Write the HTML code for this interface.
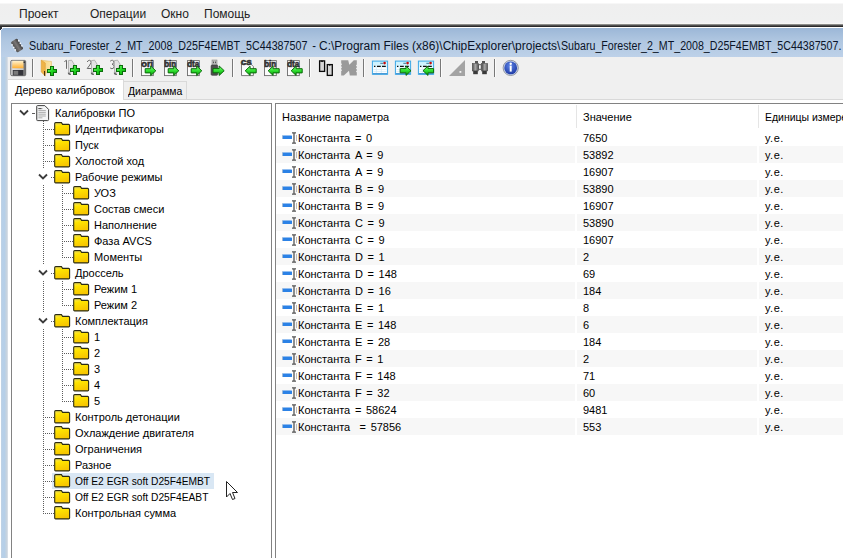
<!DOCTYPE html><html><head><meta charset="utf-8"><style>
*{margin:0;padding:0;box-sizing:border-box}
html,body{width:843px;height:558px;overflow:hidden;background:#f0f0f0;font-family:"Liberation Sans", sans-serif;}
.a{position:absolute}
.t11{font-size:11px;line-height:16px;white-space:pre;color:#000}
.t12{font-size:12px;line-height:16px;white-space:pre;color:#000}
</style></head><body>
<div class="a" style="left:0;top:0;width:843px;height:24px;background:linear-gradient(#ffffff 0,#ffffff 3px,#efefef 4px,#eff0f0 20px,#f1f1f4 23px)"></div>
<div class="a t12" style="left:19px;top:6px;color:#1e1e1e">Проект</div>
<div class="a t12" style="left:90px;top:6px;color:#1e1e1e">Операции</div>
<div class="a t12" style="left:161px;top:6px;color:#1e1e1e">Окно</div>
<div class="a t12" style="left:204px;top:6px;color:#1e1e1e">Помощь</div>
<div class="a" style="left:0;top:23px;width:843px;height:1px;background:#f6f6f4"></div>
<div class="a" style="left:0;top:24px;width:843px;height:1px;background:#8c8c8a"></div>
<div class="a" style="left:0;top:25px;width:843px;height:1px;background:#4e4e4e"></div>
<div class="a" style="left:0;top:26px;width:843px;height:1px;background:#2a2a2a"></div>
<div class="a" style="left:0;top:27px;width:843px;height:531px;background:#c5d7ea"></div>
<div class="a" style="left:1px;top:27px;width:842px;height:1px;background:#ffffff"></div>
<div class="a" style="left:0;top:28px;width:1px;height:530px;background:#ffffff"></div>
<div class="a" style="left:0;top:27px;width:2px;height:2px;background:#2e3034;z-index:2"></div>
<div class="a" style="left:0;top:29px;width:1px;height:1px;background:#24324a;z-index:2"></div>
<div class="a" style="left:1px;top:29px;width:1px;height:1px;background:#e8eef6;z-index:2"></div>
<div class="a" style="left:2px;top:28px;width:1px;height:1px;background:#e8eef6;z-index:2"></div>
<div class="a" style="left:1px;top:28px;width:842px;height:29px;background:linear-gradient(#9cb7d7,#b0c7e1 45%,#bdd1e9)"></div>
<div class="a" style="left:1px;top:57px;width:6px;height:501px;background:linear-gradient(90deg,#c4d3e2 0,#b8d0e8 1px,#b6cfe8 4px,#c6d3df 5px)"></div>
<svg class="a" style="left:6px;top:34px" width="22" height="22" viewBox="0 0 22 22"><defs><linearGradient id="chipg" x1="0" y1="0" x2="1" y2="0"><stop offset="0" stop-color="#505050"/><stop offset="0.5" stop-color="#7a7777"/><stop offset="1" stop-color="#3c3c3c"/></linearGradient></defs><g transform="rotate(-32 11 11.5)"><rect x="7.3" y="5.3" width="7.6" height="12.4" rx="1.5" fill="url(#chipg)"/><g fill="#f4f6fa"><circle cx="7.2" cy="8.4" r="0.85"/><circle cx="7.2" cy="11.4" r="0.85"/><circle cx="7.2" cy="14.4" r="0.85"/><circle cx="15" cy="8.4" r="0.85"/><circle cx="15" cy="11.4" r="0.85"/><circle cx="15" cy="14.4" r="0.85"/></g></g></svg>
<div style="font-size:12.5px;line-height:16px;white-space:pre;color:#0a1428;position:absolute;top:38px;transform-origin:0 0;left:29px;transform:scaleX(0.856)">Subaru_Forester_2_MT_2008_D25F4EMBT_5C44387507</div>
<div style="font-size:12.5px;line-height:16px;white-space:pre;color:#0a1428;position:absolute;top:38px;transform-origin:0 0;left:309px;transform:scaleX(0.9)"> - </div>
<div style="font-size:12.5px;line-height:16px;white-space:pre;color:#0a1428;position:absolute;top:38px;transform-origin:0 0;left:319px;transform:scaleX(0.957)">C:\Program Files (x86)\ChipExplorer\projects\</div>
<div style="font-size:12.5px;line-height:16px;white-space:pre;color:#0a1428;position:absolute;top:38px;transform-origin:0 0;left:561px;transform:scaleX(0.853)">Subaru_Forester_2_MT_2008_D25F4EMBT_5C44387507.</div>
<div class="a" style="left:7px;top:57px;width:836px;height:501px;background:#f0f0f0;border-left:1px solid #d6dde6"></div>
<div class="a" style="left:8px;top:57px;width:835px;height:22px;background:#f0f0f0"></div>
<div class="a" style="left:32px;top:59px;width:1px;height:18px;background:#787878"></div>
<div class="a" style="left:33px;top:59px;width:1px;height:18px;background:#fbfbfb"></div>
<div class="a" style="left:132px;top:59px;width:1px;height:18px;background:#787878"></div>
<div class="a" style="left:133px;top:59px;width:1px;height:18px;background:#fbfbfb"></div>
<div class="a" style="left:232px;top:59px;width:1px;height:18px;background:#787878"></div>
<div class="a" style="left:233px;top:59px;width:1px;height:18px;background:#fbfbfb"></div>
<div class="a" style="left:309px;top:59px;width:1px;height:18px;background:#787878"></div>
<div class="a" style="left:310px;top:59px;width:1px;height:18px;background:#fbfbfb"></div>
<div class="a" style="left:363px;top:59px;width:1px;height:18px;background:#787878"></div>
<div class="a" style="left:364px;top:59px;width:1px;height:18px;background:#fbfbfb"></div>
<div class="a" style="left:440px;top:59px;width:1px;height:18px;background:#787878"></div>
<div class="a" style="left:441px;top:59px;width:1px;height:18px;background:#fbfbfb"></div>
<div class="a" style="left:494px;top:59px;width:1px;height:18px;background:#787878"></div>
<div class="a" style="left:495px;top:59px;width:1px;height:18px;background:#fbfbfb"></div>
<svg width="0" height="0" style="position:absolute"><defs>
<linearGradient id="gPlus" x1="0" y1="0" x2="1" y2="1"><stop offset="0" stop-color="#7dff7d"/><stop offset="0.5" stop-color="#22d822"/><stop offset="1" stop-color="#0a9a0a"/></linearGradient>
<linearGradient id="gArr" x1="0" y1="0" x2="0" y2="1"><stop offset="0" stop-color="#8dff8d"/><stop offset="0.5" stop-color="#2ee02e"/><stop offset="1" stop-color="#0b8f0b"/></linearGradient>
<linearGradient id="gFlop" x1="0" y1="0" x2="0" y2="1"><stop offset="0" stop-color="#fff3cf"/><stop offset="1" stop-color="#ffae2e"/></linearGradient>
<linearGradient id="gFlopF" x1="0" y1="0" x2="1" y2="0"><stop offset="0" stop-color="#d6d6d6"/><stop offset="1" stop-color="#6d6d6d"/></linearGradient>
<linearGradient id="gFold" x1="0" y1="0" x2="1" y2="0"><stop offset="0" stop-color="#f7cf7a"/><stop offset="1" stop-color="#fbe6a8"/></linearGradient>
<linearGradient id="gTab" x1="0" y1="0" x2="0" y2="1"><stop offset="0" stop-color="#c5f0ff"/><stop offset="1" stop-color="#f4fcff"/></linearGradient>
<linearGradient id="gFolder" x1="0" y1="0" x2="0.3" y2="1"><stop offset="0" stop-color="#fff36a"/><stop offset="0.35" stop-color="#ffe400"/><stop offset="1" stop-color="#f7c600"/></linearGradient>
<radialGradient id="gInfo" cx="0.45" cy="0.35" r="0.7"><stop offset="0" stop-color="#5f86e8"/><stop offset="1" stop-color="#1a35a0"/></radialGradient>
<linearGradient id="gBin" x1="0" y1="0" x2="1" y2="0"><stop offset="0" stop-color="#4a4a4a"/><stop offset="0.5" stop-color="#a8a8a8"/><stop offset="1" stop-color="#5a5a5a"/></linearGradient>
</defs></svg>
<svg class="a" style="left:8px;top:58px" width="20" height="20" viewBox="0 0 20 20"><rect x="2.7" y="2.4" width="15" height="15.3" rx="1.2" fill="url(#gFlopF)" stroke="#5c5c5c" stroke-width="0.8"/>
<rect x="4.3" y="2.8" width="11.2" height="7.6" fill="url(#gFlop)"/>
<rect x="4.2" y="10.5" width="11.4" height="1.2" fill="#e8e8e8"/>
<rect x="4.8" y="12" width="10.4" height="5.4" fill="#34343a"/>
<rect x="5.6" y="12.8" width="4.6" height="4" fill="#7a7a7a"/>
<rect x="15.6" y="3.6" width="1.2" height="1.2" fill="#111"/></svg>
<svg class="a" style="left:39px;top:58px" width="20" height="20" viewBox="0 0 20 20"><path d="M2.4 2.2 L12.5 3.5 L12.5 14.5 L6 15 Z" fill="url(#gFold)" stroke="#e3b35a" stroke-width="0.5"/>
<path d="M2.2 2.2 L6.3 5 L6.3 18 L2.2 14 Z" fill="#efb347" stroke="#d9962e" stroke-width="0.5"/>
<path d="M5.6 13 L5.6 17.8" stroke="#3a2200" stroke-width="1"/>
<path d="M11.5 8.5h3v3.0h3.0v3h-3.0v3.0h-3v-3.0h-3.0v-3h3.0z" fill="url(#gPlus)" stroke="#0b6e0b" stroke-width="1" shape-rendering="crispEdges"/></svg>
<svg class="a" style="left:62px;top:58px" width="20" height="20" viewBox="0 0 20 20"><path d="M2.4 3.6 L4.5 2.3 V10.8" fill="none" stroke="#6a6a6a" stroke-width="1"/>
<path d="M6.4 2.6 L9.6 2.2 L12.2 6.4 L8.6 14.2 L6.6 14.4 Z" fill="#e2e2e2" stroke="#9c9c9c" stroke-width="0.7"/>
<path d="M6.4 14.6 Q6.8 16.6 8.8 16.2" fill="none" stroke="#5a5a5a" stroke-width="1.5"/>
<path d="M11.5 7.5h3v3.0h3.0v3h-3.0v3.0h-3v-3.0h-3.0v-3h3.0z" fill="url(#gPlus)" stroke="#0b6e0b" stroke-width="1" shape-rendering="crispEdges"/></svg>
<svg class="a" style="left:85px;top:58px" width="20" height="20" viewBox="0 0 20 20"><path d="M2.2 4 Q3 2.2 4.6 2.3 Q6.4 2.6 6 4.6 Q5.5 6.5 2.2 10.5 H6.6" fill="none" stroke="#6a6a6a" stroke-width="1"/>
<path d="M6.4 2.6 L9.6 2.2 L12.2 6.4 L8.6 14.2 L6.6 14.4 Z" fill="#e2e2e2" stroke="#9c9c9c" stroke-width="0.7"/>
<path d="M6.4 14.6 Q6.8 16.6 8.8 16.2" fill="none" stroke="#5a5a5a" stroke-width="1.5"/>
<path d="M11.5 7.5h3v3.0h3.0v3h-3.0v3.0h-3v-3.0h-3.0v-3h3.0z" fill="url(#gPlus)" stroke="#0b6e0b" stroke-width="1" shape-rendering="crispEdges"/></svg>
<svg class="a" style="left:108px;top:58px" width="20" height="20" viewBox="0 0 20 20"><path d="M2.2 3.2 Q3.2 2.2 4.5 2.3 Q6.2 2.6 5.8 4.6 Q5.5 6 4 6.2 Q6.4 6.5 6.1 8.7 Q5.7 10.8 4 10.7 Q2.8 10.7 2.1 9.8" fill="none" stroke="#6a6a6a" stroke-width="1"/>
<path d="M6.4 2.6 L9.6 2.2 L12.2 6.4 L8.6 14.2 L6.6 14.4 Z" fill="#e2e2e2" stroke="#9c9c9c" stroke-width="0.7"/>
<path d="M6.4 14.6 Q6.8 16.6 8.8 16.2" fill="none" stroke="#5a5a5a" stroke-width="1.5"/>
<path d="M11.5 7.5h3v3.0h3.0v3h-3.0v3.0h-3v-3.0h-3.0v-3h3.0z" fill="url(#gPlus)" stroke="#0b6e0b" stroke-width="1" shape-rendering="crispEdges"/></svg>
<svg class="a" style="left:139px;top:58px" width="20" height="20" viewBox="0 0 20 20"><rect x="2.5" y="2.6" width="11.8" height="15" fill="#fbfbfb" stroke="#6c6c6c" stroke-width="0.9"/><text x="2.2" y="8.6" font-family="Liberation Sans" font-weight="bold" font-size="9" fill="#2d2d2d" stroke="#2d2d2d" stroke-width="0.55" textLength="12" lengthAdjust="spacingAndGlyphs">ori</text><path d="M6.2 10.700000000000001H11.7V8L16.8 12.8L11.7 17.6V14.9H6.2Z" fill="url(#gArr)" stroke="#0a6a0a" stroke-width="1" stroke-linejoin="round"/></svg>
<svg class="a" style="left:162px;top:58px" width="20" height="20" viewBox="0 0 20 20"><rect x="2.5" y="2.6" width="11.8" height="15" fill="#fbfbfb" stroke="#6c6c6c" stroke-width="0.9"/><text x="2.2" y="8.6" font-family="Liberation Sans" font-weight="bold" font-size="9" fill="#2d2d2d" stroke="#2d2d2d" stroke-width="0.55" textLength="12" lengthAdjust="spacingAndGlyphs">bin</text><path d="M6.2 10.700000000000001H11.7V8L16.8 12.8L11.7 17.6V14.9H6.2Z" fill="url(#gArr)" stroke="#0a6a0a" stroke-width="1" stroke-linejoin="round"/></svg>
<svg class="a" style="left:185px;top:58px" width="20" height="20" viewBox="0 0 20 20"><rect x="2.5" y="2.6" width="11.8" height="15" fill="#fbfbfb" stroke="#6c6c6c" stroke-width="0.9"/><text x="2.2" y="8.6" font-family="Liberation Sans" font-weight="bold" font-size="9" fill="#2d2d2d" stroke="#2d2d2d" stroke-width="0.55" textLength="12" lengthAdjust="spacingAndGlyphs">dta</text><path d="M6.2 10.700000000000001H11.7V8L16.8 12.8L11.7 17.6V14.9H6.2Z" fill="url(#gArr)" stroke="#0a6a0a" stroke-width="1" stroke-linejoin="round"/></svg>
<svg class="a" style="left:239px;top:58px" width="20" height="20" viewBox="0 0 20 20"><path d="M2.5 6 H11.8 L14.4 8.6 V17.6 H2.5 Z" fill="#fbfbfb" stroke="#6c6c6c" stroke-width="0.9"/><text x="1.8" y="6.6" font-family="Liberation Sans" font-weight="bold" font-size="8.6" fill="#333" stroke="#333" stroke-width="0.55" textLength="11" lengthAdjust="spacingAndGlyphs">cs</text><path d="M17.2 10.7H11.100000000000001V8.2L6.2 12.799999999999999L11.100000000000001 17.4V14.899999999999999H17.2Z" fill="url(#gArr)" stroke="#0a6a0a" stroke-width="1" stroke-linejoin="round"/></svg>
<svg class="a" style="left:262px;top:58px" width="20" height="20" viewBox="0 0 20 20"><rect x="2.5" y="2.6" width="11.8" height="15" fill="#fbfbfb" stroke="#6c6c6c" stroke-width="0.9"/><text x="2.2" y="8.6" font-family="Liberation Sans" font-weight="bold" font-size="9" fill="#2d2d2d" stroke="#2d2d2d" stroke-width="0.55" textLength="12" lengthAdjust="spacingAndGlyphs">bin</text><path d="M17.2 10.7H11.100000000000001V8.2L6.2 12.799999999999999L11.100000000000001 17.4V14.899999999999999H17.2Z" fill="url(#gArr)" stroke="#0a6a0a" stroke-width="1" stroke-linejoin="round"/></svg>
<svg class="a" style="left:285px;top:58px" width="20" height="20" viewBox="0 0 20 20"><rect x="2.5" y="2.6" width="11.8" height="15" fill="#fbfbfb" stroke="#6c6c6c" stroke-width="0.9"/><text x="2.2" y="8.6" font-family="Liberation Sans" font-weight="bold" font-size="9" fill="#2d2d2d" stroke="#2d2d2d" stroke-width="0.55" textLength="12" lengthAdjust="spacingAndGlyphs">dta</text><path d="M17.2 10.7H11.100000000000001V8.2L6.2 12.799999999999999L11.100000000000001 17.4V14.899999999999999H17.2Z" fill="url(#gArr)" stroke="#0a6a0a" stroke-width="1" stroke-linejoin="round"/></svg>
<svg class="a" style="left:208px;top:58px" width="20" height="20" viewBox="0 0 20 20"><rect x="4" y="2" width="5" height="5.4" fill="#bdbdbd" stroke="#8a8a8a" stroke-width="0.6"/>
<rect x="5" y="3.6" width="1" height="1.6" fill="#555"/><rect x="7" y="3.6" width="1" height="1.6" fill="#555"/>
<rect x="3.1" y="7" width="6.6" height="10.3" rx="1" fill="#4e4e4e" stroke="#333" stroke-width="0.6"/>
<path d="M5 10.6H11.2V8L16.2 12.7L11.2 17.4V14.799999999999999H5Z" fill="url(#gArr)" stroke="#0a6a0a" stroke-width="1" stroke-linejoin="round"/></svg>
<svg class="a" style="left:316px;top:58px" width="20" height="20" viewBox="0 0 20 20"><rect x="3.6" y="2.9" width="5" height="10.5" fill="#d7d7d7" stroke="#0a0a0a" stroke-width="1.3"/><path d="M5.1 2.9 Q6.1 4.2 7.1 2.9" fill="#0a0a0a" stroke="#0a0a0a" stroke-width="1"/><rect x="11.3" y="6.6" width="5" height="10.8" fill="#d7d7d7" stroke="#0a0a0a" stroke-width="1.3"/><path d="M12.8 6.6 Q13.8 7.8999999999999995 14.8 6.6" fill="#0a0a0a" stroke="#0a0a0a" stroke-width="1"/></svg>
<svg class="a" style="left:339px;top:58px" width="20" height="20" viewBox="0 0 20 20"><path d="M2.2 2.2 H9.2 L10.3 6.8 L14.8 2.2 H17.8 V17.6 H10.8 L10 12.7 L4.8 17.6 H2.2 Z" fill="#9a9a9a"/>
<g fill="#f0f0f0"><circle cx="2.2" cy="6.3" r="0.7"/><circle cx="2.2" cy="9.3" r="0.7"/><circle cx="2.2" cy="12.3" r="0.7"/><circle cx="17.8" cy="7.5" r="0.7"/><circle cx="17.8" cy="10.5" r="0.7"/><circle cx="17.8" cy="13.5" r="0.7"/></g></svg>
<svg class="a" style="left:370px;top:58px" width="20" height="20" viewBox="0 0 20 20"><rect x="2.4" y="3.1" width="15.2" height="13.2" fill="url(#gTab)" stroke="#3da8e6" stroke-width="1"/>
<rect x="2.9" y="15.2" width="14.2" height="1" fill="#2a88d0"/>
<path d="M10.3 5.3 H13.3" stroke="#2e6e88" stroke-width="0.9"/>
<circle cx="14.6" cy="5.1" r="1.3" fill="#c80c0c"/>
<path d="M4 8.4 H5.4 M7 8.4 H10.8 M12 8.4 H15.8" stroke="#101010" stroke-width="1.1"/>
<rect x="3.4" y="9.6" width="13.2" height="5.4" fill="#ffffff"/>
<path d="M3.4 11.6 H16.6 M3.4 13.6 H16.6" stroke="#cfeaf8" stroke-width="0.7"/>
<path d="M6.4 9.6 V15 M11.4 9.6 V15" stroke="#cfeaf8" stroke-width="0.7"/></svg>
<svg class="a" style="left:393px;top:58px" width="20" height="20" viewBox="0 0 20 20"><rect x="2.4" y="3.1" width="15.2" height="13.2" fill="url(#gTab)" stroke="#3da8e6" stroke-width="1"/>
<rect x="2.9" y="15.2" width="14.2" height="1" fill="#2a88d0"/>
<path d="M10.3 5.3 H13.3" stroke="#2e6e88" stroke-width="0.9"/>
<circle cx="14.6" cy="5.1" r="1.3" fill="#c80c0c"/>
<path d="M4 8.4 H5.4 M7 8.4 H10.8 M12 8.4 H15.8" stroke="#101010" stroke-width="1.1"/>
<rect x="3.4" y="9.6" width="13.2" height="5.4" fill="#ffffff"/>
<path d="M3.4 11.6 H16.6 M3.4 13.6 H16.6" stroke="#cfeaf8" stroke-width="0.7"/>
<path d="M6.4 9.6 V15 M11.4 9.6 V15" stroke="#cfeaf8" stroke-width="0.7"/><path d="M7.2 10.6H13.0V8L18 12.7L13.0 17.4V14.799999999999999H7.2Z" fill="url(#gArr)" stroke="#0a6a0a" stroke-width="1" stroke-linejoin="round"/></svg>
<svg class="a" style="left:416px;top:58px" width="20" height="20" viewBox="0 0 20 20"><rect x="2.4" y="3.1" width="15.2" height="13.2" fill="url(#gTab)" stroke="#3da8e6" stroke-width="1"/>
<rect x="2.9" y="15.2" width="14.2" height="1" fill="#2a88d0"/>
<path d="M10.3 5.3 H13.3" stroke="#2e6e88" stroke-width="0.9"/>
<circle cx="14.6" cy="5.1" r="1.3" fill="#c80c0c"/>
<path d="M4 8.4 H5.4 M7 8.4 H10.8 M12 8.4 H15.8" stroke="#101010" stroke-width="1.1"/>
<rect x="3.4" y="9.6" width="13.2" height="5.4" fill="#ffffff"/>
<path d="M3.4 11.6 H16.6 M3.4 13.6 H16.6" stroke="#cfeaf8" stroke-width="0.7"/>
<path d="M6.4 9.6 V15 M11.4 9.6 V15" stroke="#cfeaf8" stroke-width="0.7"/><path d="M17.6 10.6H12.0V8L7 12.7L12.0 17.4V14.799999999999999H17.6Z" fill="url(#gArr)" stroke="#0a6a0a" stroke-width="1" stroke-linejoin="round"/></svg>
<svg class="a" style="left:447px;top:58px" width="20" height="20" viewBox="0 0 20 20"><path d="M18 2 V18 H2 Z" fill="#a3a3a3"/><rect x="12.5" y="13" width="1.8" height="1.8" fill="#f4f4f4"/></svg>
<svg class="a" style="left:470px;top:58px" width="20" height="20" viewBox="0 0 20 20"><rect x="5" y="3" width="3" height="2.6" fill="#555"/><rect x="12" y="3" width="3" height="2.6" fill="#555"/>
<rect x="2.3" y="5.4" width="6" height="7.6" fill="url(#gBin)" stroke="#444" stroke-width="0.5"/>
<rect x="11.7" y="5.4" width="6" height="7.6" fill="url(#gBin)" stroke="#444" stroke-width="0.5"/>
<rect x="3.2" y="12.8" width="4.6" height="3.4" fill="#3a3a3a"/><rect x="12.2" y="12.8" width="4.6" height="3.4" fill="#3a3a3a"/>
<rect x="8" y="6.2" width="3.8" height="5.6" fill="#555"/><rect x="9" y="7.2" width="1.8" height="3.6" fill="#f2f2f2"/></svg>
<svg class="a" style="left:500px;top:58px" width="20" height="20" viewBox="0 0 20 20"><circle cx="10.7" cy="9.9" r="7.6" fill="#c8d4ec" stroke="#8b8f98" stroke-width="0.9"/>
<circle cx="10.7" cy="9.9" r="6.4" fill="url(#gInfo)"/>
<circle cx="10.7" cy="5.7" r="1.2" fill="#fff"/><rect x="9.7" y="7.6" width="2" height="6" fill="#fff"/></svg>
<div class="a" style="left:8px;top:99px;width:835px;height:459px;background:#fff"></div>
<div class="a" style="left:123px;top:99px;width:720px;height:1px;background:#d9d9d9"></div>
<div class="a" style="left:123px;top:81px;width:64px;height:19px;background:#efefef;border:1px solid #d9d9d9;border-left:none"></div>
<div class="a" style="left:8px;top:79px;width:116px;height:21px;background:#fff;border-top:1px solid #dadada;border-right:1px solid #dadada"></div>
<div class="a t11" style="left:15px;top:82px">Дерево калибровок</div>
<div class="a t11" style="left:128px;top:83px;transform-origin:0 0;transform:scaleX(0.95)">Диаграмма</div>
<div class="a" style="left:11px;top:103px;width:261px;height:460px;background:#fff;border:1px solid #828282"></div>
<div class="a" style="left:275px;top:103px;width:600px;height:460px;background:#fff;border:1px solid #828282"></div>
<div class="a" style="left:43px;top:121px;width:1px;height:393px;background:repeating-linear-gradient(180deg,#5c5c5c 0 1px,transparent 1px 2px)"></div>
<div class="a" style="left:62px;top:185px;width:1px;height:73px;background:repeating-linear-gradient(180deg,#5c5c5c 0 1px,transparent 1px 2px)"></div>
<div class="a" style="left:62px;top:281px;width:1px;height:25px;background:repeating-linear-gradient(180deg,#5c5c5c 0 1px,transparent 1px 2px)"></div>
<div class="a" style="left:62px;top:329px;width:1px;height:73px;background:repeating-linear-gradient(180deg,#5c5c5c 0 1px,transparent 1px 2px)"></div>
<div class="a" style="left:52px;top:473px;width:162px;height:16px;background:#d9e7f4"></div>
<div class="a" style="left:31px;top:113px;width:4px;height:1px;background:repeating-linear-gradient(90deg,#5c5c5c 0 1px,transparent 1px 2px)"></div>
<div class="a" style="left:16px;top:105px;width:16px;height:16px;background:#fff"></div>
<div class="a" style="left:32px;top:113px;width:4px;height:1px;background:repeating-linear-gradient(90deg,#5c5c5c 0 1px,transparent 1px 2px)"></div>
<svg style="position:absolute;left:19px;top:109px" width="11" height="8" viewBox="0 0 11 8"><path d="M1 1.5 L5 5.5 L9 1.5" fill="none" stroke="#3c3c3c" stroke-width="1.8"/></svg>
<svg style="position:absolute;left:35px;top:105px" width="16" height="17" viewBox="0 0 16 17"><path d="M1.6 1.6 Q1.6 0.6 2.6 0.6 L9.8 0.6 L13.6 4.4 L13.6 14.6 Q13.6 15.6 12.6 15.6 L2.6 15.6 Q1.6 15.6 1.6 14.6 Z" fill="#f4f5f6" stroke="#404040" stroke-width="1"/><path d="M2.2 2 V15" stroke="#b0b0b0" stroke-width="0.8"/><path d="M3.4 3.6h4.2M3.4 5.6h7.4M3.4 7.4h7.4M3.4 9.2h7.4M3.4 11h7.4M3.4 12.8h4" stroke="#9a9a9a" stroke-width="0.8"/><path d="M3.4 3.6h3" stroke="#505050" stroke-width="1"/></svg>
<div class="a t11" style="left:55px;top:105px;">Калибровки ПО</div>
<div class="a" style="left:45px;top:129px;width:9px;height:1px;background:repeating-linear-gradient(90deg,#5c5c5c 0 1px,transparent 1px 2px)"></div>
<svg style="position:absolute;left:54px;top:122px" width="17" height="14" viewBox="0 0 17 14"><path d="M0.7 1.6 Q0.7 0.6 1.7 0.6 L7.4 0.6 L8.6 2.4 L14.6 2.4 Q15.6 2.4 15.6 3.4 L15.6 12 Q15.6 12.9 14.7 12.9 L1.6 12.9 Q0.7 12.9 0.7 12 Z" fill="url(#gFolder)" stroke="#2c2c14" stroke-width="1.1"/><path d="M1.6 2.6 H7" stroke="#e0c040" stroke-width="0.6" opacity="0.6"/></svg>
<div class="a t11" style="left:75px;top:121px;">Идентификаторы</div>
<div class="a" style="left:45px;top:145px;width:9px;height:1px;background:repeating-linear-gradient(90deg,#5c5c5c 0 1px,transparent 1px 2px)"></div>
<svg style="position:absolute;left:54px;top:138px" width="17" height="14" viewBox="0 0 17 14"><path d="M0.7 1.6 Q0.7 0.6 1.7 0.6 L7.4 0.6 L8.6 2.4 L14.6 2.4 Q15.6 2.4 15.6 3.4 L15.6 12 Q15.6 12.9 14.7 12.9 L1.6 12.9 Q0.7 12.9 0.7 12 Z" fill="url(#gFolder)" stroke="#2c2c14" stroke-width="1.1"/><path d="M1.6 2.6 H7" stroke="#e0c040" stroke-width="0.6" opacity="0.6"/></svg>
<div class="a t11" style="left:75px;top:137px;">Пуск</div>
<div class="a" style="left:45px;top:161px;width:9px;height:1px;background:repeating-linear-gradient(90deg,#5c5c5c 0 1px,transparent 1px 2px)"></div>
<svg style="position:absolute;left:54px;top:154px" width="17" height="14" viewBox="0 0 17 14"><path d="M0.7 1.6 Q0.7 0.6 1.7 0.6 L7.4 0.6 L8.6 2.4 L14.6 2.4 Q15.6 2.4 15.6 3.4 L15.6 12 Q15.6 12.9 14.7 12.9 L1.6 12.9 Q0.7 12.9 0.7 12 Z" fill="url(#gFolder)" stroke="#2c2c14" stroke-width="1.1"/><path d="M1.6 2.6 H7" stroke="#e0c040" stroke-width="0.6" opacity="0.6"/></svg>
<div class="a t11" style="left:75px;top:153px;">Холостой ход</div>
<div class="a" style="left:45px;top:177px;width:9px;height:1px;background:repeating-linear-gradient(90deg,#5c5c5c 0 1px,transparent 1px 2px)"></div>
<div class="a" style="left:35px;top:169px;width:16px;height:16px;background:#fff"></div>
<div class="a" style="left:51px;top:177px;width:3px;height:1px;background:repeating-linear-gradient(90deg,#5c5c5c 0 1px,transparent 1px 2px)"></div>
<svg style="position:absolute;left:38px;top:173px" width="11" height="8" viewBox="0 0 11 8"><path d="M1 1.5 L5 5.5 L9 1.5" fill="none" stroke="#3c3c3c" stroke-width="1.8"/></svg>
<svg style="position:absolute;left:54px;top:170px" width="17" height="14" viewBox="0 0 17 14"><path d="M0.7 1.6 Q0.7 0.6 1.7 0.6 L7.4 0.6 L8.6 2.4 L14.6 2.4 Q15.6 2.4 15.6 3.4 L15.6 12 Q15.6 12.9 14.7 12.9 L1.6 12.9 Q0.7 12.9 0.7 12 Z" fill="url(#gFolder)" stroke="#2c2c14" stroke-width="1.1"/><path d="M1.6 2.6 H7" stroke="#e0c040" stroke-width="0.6" opacity="0.6"/></svg>
<div class="a t11" style="left:75px;top:169px;">Рабочие режимы</div>
<div class="a" style="left:64px;top:193px;width:9px;height:1px;background:repeating-linear-gradient(90deg,#5c5c5c 0 1px,transparent 1px 2px)"></div>
<svg style="position:absolute;left:73px;top:186px" width="17" height="14" viewBox="0 0 17 14"><path d="M0.7 1.6 Q0.7 0.6 1.7 0.6 L7.4 0.6 L8.6 2.4 L14.6 2.4 Q15.6 2.4 15.6 3.4 L15.6 12 Q15.6 12.9 14.7 12.9 L1.6 12.9 Q0.7 12.9 0.7 12 Z" fill="url(#gFolder)" stroke="#2c2c14" stroke-width="1.1"/><path d="M1.6 2.6 H7" stroke="#e0c040" stroke-width="0.6" opacity="0.6"/></svg>
<div class="a t11" style="left:94px;top:185px;">УОЗ</div>
<div class="a" style="left:64px;top:209px;width:9px;height:1px;background:repeating-linear-gradient(90deg,#5c5c5c 0 1px,transparent 1px 2px)"></div>
<svg style="position:absolute;left:73px;top:202px" width="17" height="14" viewBox="0 0 17 14"><path d="M0.7 1.6 Q0.7 0.6 1.7 0.6 L7.4 0.6 L8.6 2.4 L14.6 2.4 Q15.6 2.4 15.6 3.4 L15.6 12 Q15.6 12.9 14.7 12.9 L1.6 12.9 Q0.7 12.9 0.7 12 Z" fill="url(#gFolder)" stroke="#2c2c14" stroke-width="1.1"/><path d="M1.6 2.6 H7" stroke="#e0c040" stroke-width="0.6" opacity="0.6"/></svg>
<div class="a t11" style="left:94px;top:201px;">Состав смеси</div>
<div class="a" style="left:64px;top:225px;width:9px;height:1px;background:repeating-linear-gradient(90deg,#5c5c5c 0 1px,transparent 1px 2px)"></div>
<svg style="position:absolute;left:73px;top:218px" width="17" height="14" viewBox="0 0 17 14"><path d="M0.7 1.6 Q0.7 0.6 1.7 0.6 L7.4 0.6 L8.6 2.4 L14.6 2.4 Q15.6 2.4 15.6 3.4 L15.6 12 Q15.6 12.9 14.7 12.9 L1.6 12.9 Q0.7 12.9 0.7 12 Z" fill="url(#gFolder)" stroke="#2c2c14" stroke-width="1.1"/><path d="M1.6 2.6 H7" stroke="#e0c040" stroke-width="0.6" opacity="0.6"/></svg>
<div class="a t11" style="left:94px;top:217px;">Наполнение</div>
<div class="a" style="left:64px;top:241px;width:9px;height:1px;background:repeating-linear-gradient(90deg,#5c5c5c 0 1px,transparent 1px 2px)"></div>
<svg style="position:absolute;left:73px;top:234px" width="17" height="14" viewBox="0 0 17 14"><path d="M0.7 1.6 Q0.7 0.6 1.7 0.6 L7.4 0.6 L8.6 2.4 L14.6 2.4 Q15.6 2.4 15.6 3.4 L15.6 12 Q15.6 12.9 14.7 12.9 L1.6 12.9 Q0.7 12.9 0.7 12 Z" fill="url(#gFolder)" stroke="#2c2c14" stroke-width="1.1"/><path d="M1.6 2.6 H7" stroke="#e0c040" stroke-width="0.6" opacity="0.6"/></svg>
<div class="a t11" style="left:94px;top:233px;">Фаза AVCS</div>
<div class="a" style="left:64px;top:257px;width:9px;height:1px;background:repeating-linear-gradient(90deg,#5c5c5c 0 1px,transparent 1px 2px)"></div>
<svg style="position:absolute;left:73px;top:250px" width="17" height="14" viewBox="0 0 17 14"><path d="M0.7 1.6 Q0.7 0.6 1.7 0.6 L7.4 0.6 L8.6 2.4 L14.6 2.4 Q15.6 2.4 15.6 3.4 L15.6 12 Q15.6 12.9 14.7 12.9 L1.6 12.9 Q0.7 12.9 0.7 12 Z" fill="url(#gFolder)" stroke="#2c2c14" stroke-width="1.1"/><path d="M1.6 2.6 H7" stroke="#e0c040" stroke-width="0.6" opacity="0.6"/></svg>
<div class="a t11" style="left:94px;top:249px;">Моменты</div>
<div class="a" style="left:45px;top:273px;width:9px;height:1px;background:repeating-linear-gradient(90deg,#5c5c5c 0 1px,transparent 1px 2px)"></div>
<div class="a" style="left:35px;top:265px;width:16px;height:16px;background:#fff"></div>
<div class="a" style="left:51px;top:273px;width:3px;height:1px;background:repeating-linear-gradient(90deg,#5c5c5c 0 1px,transparent 1px 2px)"></div>
<svg style="position:absolute;left:38px;top:269px" width="11" height="8" viewBox="0 0 11 8"><path d="M1 1.5 L5 5.5 L9 1.5" fill="none" stroke="#3c3c3c" stroke-width="1.8"/></svg>
<svg style="position:absolute;left:54px;top:266px" width="17" height="14" viewBox="0 0 17 14"><path d="M0.7 1.6 Q0.7 0.6 1.7 0.6 L7.4 0.6 L8.6 2.4 L14.6 2.4 Q15.6 2.4 15.6 3.4 L15.6 12 Q15.6 12.9 14.7 12.9 L1.6 12.9 Q0.7 12.9 0.7 12 Z" fill="url(#gFolder)" stroke="#2c2c14" stroke-width="1.1"/><path d="M1.6 2.6 H7" stroke="#e0c040" stroke-width="0.6" opacity="0.6"/></svg>
<div class="a t11" style="left:75px;top:265px;">Дроссель</div>
<div class="a" style="left:64px;top:289px;width:9px;height:1px;background:repeating-linear-gradient(90deg,#5c5c5c 0 1px,transparent 1px 2px)"></div>
<svg style="position:absolute;left:73px;top:282px" width="17" height="14" viewBox="0 0 17 14"><path d="M0.7 1.6 Q0.7 0.6 1.7 0.6 L7.4 0.6 L8.6 2.4 L14.6 2.4 Q15.6 2.4 15.6 3.4 L15.6 12 Q15.6 12.9 14.7 12.9 L1.6 12.9 Q0.7 12.9 0.7 12 Z" fill="url(#gFolder)" stroke="#2c2c14" stroke-width="1.1"/><path d="M1.6 2.6 H7" stroke="#e0c040" stroke-width="0.6" opacity="0.6"/></svg>
<div class="a t11" style="left:94px;top:281px;">Режим 1</div>
<div class="a" style="left:64px;top:305px;width:9px;height:1px;background:repeating-linear-gradient(90deg,#5c5c5c 0 1px,transparent 1px 2px)"></div>
<svg style="position:absolute;left:73px;top:298px" width="17" height="14" viewBox="0 0 17 14"><path d="M0.7 1.6 Q0.7 0.6 1.7 0.6 L7.4 0.6 L8.6 2.4 L14.6 2.4 Q15.6 2.4 15.6 3.4 L15.6 12 Q15.6 12.9 14.7 12.9 L1.6 12.9 Q0.7 12.9 0.7 12 Z" fill="url(#gFolder)" stroke="#2c2c14" stroke-width="1.1"/><path d="M1.6 2.6 H7" stroke="#e0c040" stroke-width="0.6" opacity="0.6"/></svg>
<div class="a t11" style="left:94px;top:297px;">Режим 2</div>
<div class="a" style="left:45px;top:321px;width:9px;height:1px;background:repeating-linear-gradient(90deg,#5c5c5c 0 1px,transparent 1px 2px)"></div>
<div class="a" style="left:35px;top:313px;width:16px;height:16px;background:#fff"></div>
<div class="a" style="left:51px;top:321px;width:3px;height:1px;background:repeating-linear-gradient(90deg,#5c5c5c 0 1px,transparent 1px 2px)"></div>
<svg style="position:absolute;left:38px;top:317px" width="11" height="8" viewBox="0 0 11 8"><path d="M1 1.5 L5 5.5 L9 1.5" fill="none" stroke="#3c3c3c" stroke-width="1.8"/></svg>
<svg style="position:absolute;left:54px;top:314px" width="17" height="14" viewBox="0 0 17 14"><path d="M0.7 1.6 Q0.7 0.6 1.7 0.6 L7.4 0.6 L8.6 2.4 L14.6 2.4 Q15.6 2.4 15.6 3.4 L15.6 12 Q15.6 12.9 14.7 12.9 L1.6 12.9 Q0.7 12.9 0.7 12 Z" fill="url(#gFolder)" stroke="#2c2c14" stroke-width="1.1"/><path d="M1.6 2.6 H7" stroke="#e0c040" stroke-width="0.6" opacity="0.6"/></svg>
<div class="a t11" style="left:75px;top:313px;">Комплектация</div>
<div class="a" style="left:64px;top:337px;width:9px;height:1px;background:repeating-linear-gradient(90deg,#5c5c5c 0 1px,transparent 1px 2px)"></div>
<svg style="position:absolute;left:73px;top:330px" width="17" height="14" viewBox="0 0 17 14"><path d="M0.7 1.6 Q0.7 0.6 1.7 0.6 L7.4 0.6 L8.6 2.4 L14.6 2.4 Q15.6 2.4 15.6 3.4 L15.6 12 Q15.6 12.9 14.7 12.9 L1.6 12.9 Q0.7 12.9 0.7 12 Z" fill="url(#gFolder)" stroke="#2c2c14" stroke-width="1.1"/><path d="M1.6 2.6 H7" stroke="#e0c040" stroke-width="0.6" opacity="0.6"/></svg>
<div class="a t11" style="left:94px;top:329px;">1</div>
<div class="a" style="left:64px;top:353px;width:9px;height:1px;background:repeating-linear-gradient(90deg,#5c5c5c 0 1px,transparent 1px 2px)"></div>
<svg style="position:absolute;left:73px;top:346px" width="17" height="14" viewBox="0 0 17 14"><path d="M0.7 1.6 Q0.7 0.6 1.7 0.6 L7.4 0.6 L8.6 2.4 L14.6 2.4 Q15.6 2.4 15.6 3.4 L15.6 12 Q15.6 12.9 14.7 12.9 L1.6 12.9 Q0.7 12.9 0.7 12 Z" fill="url(#gFolder)" stroke="#2c2c14" stroke-width="1.1"/><path d="M1.6 2.6 H7" stroke="#e0c040" stroke-width="0.6" opacity="0.6"/></svg>
<div class="a t11" style="left:94px;top:345px;">2</div>
<div class="a" style="left:64px;top:369px;width:9px;height:1px;background:repeating-linear-gradient(90deg,#5c5c5c 0 1px,transparent 1px 2px)"></div>
<svg style="position:absolute;left:73px;top:362px" width="17" height="14" viewBox="0 0 17 14"><path d="M0.7 1.6 Q0.7 0.6 1.7 0.6 L7.4 0.6 L8.6 2.4 L14.6 2.4 Q15.6 2.4 15.6 3.4 L15.6 12 Q15.6 12.9 14.7 12.9 L1.6 12.9 Q0.7 12.9 0.7 12 Z" fill="url(#gFolder)" stroke="#2c2c14" stroke-width="1.1"/><path d="M1.6 2.6 H7" stroke="#e0c040" stroke-width="0.6" opacity="0.6"/></svg>
<div class="a t11" style="left:94px;top:361px;">3</div>
<div class="a" style="left:64px;top:385px;width:9px;height:1px;background:repeating-linear-gradient(90deg,#5c5c5c 0 1px,transparent 1px 2px)"></div>
<svg style="position:absolute;left:73px;top:378px" width="17" height="14" viewBox="0 0 17 14"><path d="M0.7 1.6 Q0.7 0.6 1.7 0.6 L7.4 0.6 L8.6 2.4 L14.6 2.4 Q15.6 2.4 15.6 3.4 L15.6 12 Q15.6 12.9 14.7 12.9 L1.6 12.9 Q0.7 12.9 0.7 12 Z" fill="url(#gFolder)" stroke="#2c2c14" stroke-width="1.1"/><path d="M1.6 2.6 H7" stroke="#e0c040" stroke-width="0.6" opacity="0.6"/></svg>
<div class="a t11" style="left:94px;top:377px;">4</div>
<div class="a" style="left:64px;top:401px;width:9px;height:1px;background:repeating-linear-gradient(90deg,#5c5c5c 0 1px,transparent 1px 2px)"></div>
<svg style="position:absolute;left:73px;top:394px" width="17" height="14" viewBox="0 0 17 14"><path d="M0.7 1.6 Q0.7 0.6 1.7 0.6 L7.4 0.6 L8.6 2.4 L14.6 2.4 Q15.6 2.4 15.6 3.4 L15.6 12 Q15.6 12.9 14.7 12.9 L1.6 12.9 Q0.7 12.9 0.7 12 Z" fill="url(#gFolder)" stroke="#2c2c14" stroke-width="1.1"/><path d="M1.6 2.6 H7" stroke="#e0c040" stroke-width="0.6" opacity="0.6"/></svg>
<div class="a t11" style="left:94px;top:393px;">5</div>
<div class="a" style="left:45px;top:417px;width:9px;height:1px;background:repeating-linear-gradient(90deg,#5c5c5c 0 1px,transparent 1px 2px)"></div>
<svg style="position:absolute;left:54px;top:410px" width="17" height="14" viewBox="0 0 17 14"><path d="M0.7 1.6 Q0.7 0.6 1.7 0.6 L7.4 0.6 L8.6 2.4 L14.6 2.4 Q15.6 2.4 15.6 3.4 L15.6 12 Q15.6 12.9 14.7 12.9 L1.6 12.9 Q0.7 12.9 0.7 12 Z" fill="url(#gFolder)" stroke="#2c2c14" stroke-width="1.1"/><path d="M1.6 2.6 H7" stroke="#e0c040" stroke-width="0.6" opacity="0.6"/></svg>
<div class="a t11" style="left:75px;top:409px;">Контроль детонации</div>
<div class="a" style="left:45px;top:433px;width:9px;height:1px;background:repeating-linear-gradient(90deg,#5c5c5c 0 1px,transparent 1px 2px)"></div>
<svg style="position:absolute;left:54px;top:426px" width="17" height="14" viewBox="0 0 17 14"><path d="M0.7 1.6 Q0.7 0.6 1.7 0.6 L7.4 0.6 L8.6 2.4 L14.6 2.4 Q15.6 2.4 15.6 3.4 L15.6 12 Q15.6 12.9 14.7 12.9 L1.6 12.9 Q0.7 12.9 0.7 12 Z" fill="url(#gFolder)" stroke="#2c2c14" stroke-width="1.1"/><path d="M1.6 2.6 H7" stroke="#e0c040" stroke-width="0.6" opacity="0.6"/></svg>
<div class="a t11" style="left:75px;top:425px;">Охлаждение двигателя</div>
<div class="a" style="left:45px;top:449px;width:9px;height:1px;background:repeating-linear-gradient(90deg,#5c5c5c 0 1px,transparent 1px 2px)"></div>
<svg style="position:absolute;left:54px;top:442px" width="17" height="14" viewBox="0 0 17 14"><path d="M0.7 1.6 Q0.7 0.6 1.7 0.6 L7.4 0.6 L8.6 2.4 L14.6 2.4 Q15.6 2.4 15.6 3.4 L15.6 12 Q15.6 12.9 14.7 12.9 L1.6 12.9 Q0.7 12.9 0.7 12 Z" fill="url(#gFolder)" stroke="#2c2c14" stroke-width="1.1"/><path d="M1.6 2.6 H7" stroke="#e0c040" stroke-width="0.6" opacity="0.6"/></svg>
<div class="a t11" style="left:75px;top:441px;">Ограничения</div>
<div class="a" style="left:45px;top:465px;width:9px;height:1px;background:repeating-linear-gradient(90deg,#5c5c5c 0 1px,transparent 1px 2px)"></div>
<svg style="position:absolute;left:54px;top:458px" width="17" height="14" viewBox="0 0 17 14"><path d="M0.7 1.6 Q0.7 0.6 1.7 0.6 L7.4 0.6 L8.6 2.4 L14.6 2.4 Q15.6 2.4 15.6 3.4 L15.6 12 Q15.6 12.9 14.7 12.9 L1.6 12.9 Q0.7 12.9 0.7 12 Z" fill="url(#gFolder)" stroke="#2c2c14" stroke-width="1.1"/><path d="M1.6 2.6 H7" stroke="#e0c040" stroke-width="0.6" opacity="0.6"/></svg>
<div class="a t11" style="left:75px;top:457px;">Разное</div>
<div class="a" style="left:45px;top:481px;width:9px;height:1px;background:repeating-linear-gradient(90deg,#5c5c5c 0 1px,transparent 1px 2px)"></div>
<svg style="position:absolute;left:54px;top:474px" width="17" height="14" viewBox="0 0 17 14"><path d="M0.7 1.6 Q0.7 0.6 1.7 0.6 L7.4 0.6 L8.6 2.4 L14.6 2.4 Q15.6 2.4 15.6 3.4 L15.6 12 Q15.6 12.9 14.7 12.9 L1.6 12.9 Q0.7 12.9 0.7 12 Z" fill="url(#gFolder)" stroke="#2c2c14" stroke-width="1.1"/><path d="M1.6 2.6 H7" stroke="#e0c040" stroke-width="0.6" opacity="0.6"/></svg>
<div class="a t11" style="left:75px;top:473px;transform-origin:0 0;transform:scaleX(0.93);">Off E2 EGR soft D25F4EMBT</div>
<div class="a" style="left:45px;top:497px;width:9px;height:1px;background:repeating-linear-gradient(90deg,#5c5c5c 0 1px,transparent 1px 2px)"></div>
<svg style="position:absolute;left:54px;top:490px" width="17" height="14" viewBox="0 0 17 14"><path d="M0.7 1.6 Q0.7 0.6 1.7 0.6 L7.4 0.6 L8.6 2.4 L14.6 2.4 Q15.6 2.4 15.6 3.4 L15.6 12 Q15.6 12.9 14.7 12.9 L1.6 12.9 Q0.7 12.9 0.7 12 Z" fill="url(#gFolder)" stroke="#2c2c14" stroke-width="1.1"/><path d="M1.6 2.6 H7" stroke="#e0c040" stroke-width="0.6" opacity="0.6"/></svg>
<div class="a t11" style="left:75px;top:489px;transform-origin:0 0;transform:scaleX(0.93);">Off E2 EGR soft D25F4EABT</div>
<div class="a" style="left:45px;top:513px;width:9px;height:1px;background:repeating-linear-gradient(90deg,#5c5c5c 0 1px,transparent 1px 2px)"></div>
<svg style="position:absolute;left:54px;top:506px" width="17" height="14" viewBox="0 0 17 14"><path d="M0.7 1.6 Q0.7 0.6 1.7 0.6 L7.4 0.6 L8.6 2.4 L14.6 2.4 Q15.6 2.4 15.6 3.4 L15.6 12 Q15.6 12.9 14.7 12.9 L1.6 12.9 Q0.7 12.9 0.7 12 Z" fill="url(#gFolder)" stroke="#2c2c14" stroke-width="1.1"/><path d="M1.6 2.6 H7" stroke="#e0c040" stroke-width="0.6" opacity="0.6"/></svg>
<div class="a t11" style="left:75px;top:505px;">Контрольная сумма</div>
<div class="a t11" style="left:282px;top:109px">Название параметра</div>
<div class="a t11" style="left:583px;top:109px">Значение</div>
<div class="a t11" style="left:765px;top:109px;transform-origin:0 0;transform:scaleX(0.95)">Единицы измерения</div>
<div class="a" style="left:576px;top:105px;width:1px;height:23px;background:#e5e5e5"></div>
<div class="a" style="left:758px;top:105px;width:1px;height:23px;background:#e5e5e5"></div>
<svg class="a" style="left:282px;top:132px" width="16" height="12" viewBox="0 0 16 12"><rect x="0.4" y="3.4" width="9.6" height="3.6" rx="0.6" fill="#2c82e6"/><rect x="0" y="3.4" width="1" height="3.6" fill="#9ab8d8"/><path d="M10 0.8h4M10 11.2h4M12 0.8v10.4" stroke="#555" stroke-width="1.3" fill="none"/><path d="M14.5 3v6" stroke="#bbb" stroke-width="1"/></svg>
<div class="a t11" style="left:298px;top:130px;word-spacing:1.6px">Константа = 0</div>
<div class="a t11" style="left:583px;top:130px">7650</div>
<div class="a t11" style="left:765px;top:130px;letter-spacing:0.6px">у.е.</div>
<div class="a" style="left:276px;top:146px;width:299px;height:17px;background:#f7f7f7"></div>
<div class="a" style="left:577px;top:146px;width:180px;height:17px;background:#f7f7f7"></div>
<div class="a" style="left:759px;top:146px;width:84px;height:17px;background:#f7f7f7"></div>
<svg class="a" style="left:282px;top:149px" width="16" height="12" viewBox="0 0 16 12"><rect x="0.4" y="3.4" width="9.6" height="3.6" rx="0.6" fill="#2c82e6"/><rect x="0" y="3.4" width="1" height="3.6" fill="#9ab8d8"/><path d="M10 0.8h4M10 11.2h4M12 0.8v10.4" stroke="#555" stroke-width="1.3" fill="none"/><path d="M14.5 3v6" stroke="#bbb" stroke-width="1"/></svg>
<div class="a t11" style="left:298px;top:147px;word-spacing:1.6px">Константа A = 9</div>
<div class="a t11" style="left:583px;top:147px">53892</div>
<div class="a t11" style="left:765px;top:147px;letter-spacing:0.6px">у.е.</div>
<svg class="a" style="left:282px;top:166px" width="16" height="12" viewBox="0 0 16 12"><rect x="0.4" y="3.4" width="9.6" height="3.6" rx="0.6" fill="#2c82e6"/><rect x="0" y="3.4" width="1" height="3.6" fill="#9ab8d8"/><path d="M10 0.8h4M10 11.2h4M12 0.8v10.4" stroke="#555" stroke-width="1.3" fill="none"/><path d="M14.5 3v6" stroke="#bbb" stroke-width="1"/></svg>
<div class="a t11" style="left:298px;top:164px;word-spacing:1.6px">Константа A = 9</div>
<div class="a t11" style="left:583px;top:164px">16907</div>
<div class="a t11" style="left:765px;top:164px;letter-spacing:0.6px">у.е.</div>
<div class="a" style="left:276px;top:180px;width:299px;height:17px;background:#f7f7f7"></div>
<div class="a" style="left:577px;top:180px;width:180px;height:17px;background:#f7f7f7"></div>
<div class="a" style="left:759px;top:180px;width:84px;height:17px;background:#f7f7f7"></div>
<svg class="a" style="left:282px;top:183px" width="16" height="12" viewBox="0 0 16 12"><rect x="0.4" y="3.4" width="9.6" height="3.6" rx="0.6" fill="#2c82e6"/><rect x="0" y="3.4" width="1" height="3.6" fill="#9ab8d8"/><path d="M10 0.8h4M10 11.2h4M12 0.8v10.4" stroke="#555" stroke-width="1.3" fill="none"/><path d="M14.5 3v6" stroke="#bbb" stroke-width="1"/></svg>
<div class="a t11" style="left:298px;top:181px;word-spacing:1.6px">Константа B = 9</div>
<div class="a t11" style="left:583px;top:181px">53890</div>
<div class="a t11" style="left:765px;top:181px;letter-spacing:0.6px">у.е.</div>
<svg class="a" style="left:282px;top:200px" width="16" height="12" viewBox="0 0 16 12"><rect x="0.4" y="3.4" width="9.6" height="3.6" rx="0.6" fill="#2c82e6"/><rect x="0" y="3.4" width="1" height="3.6" fill="#9ab8d8"/><path d="M10 0.8h4M10 11.2h4M12 0.8v10.4" stroke="#555" stroke-width="1.3" fill="none"/><path d="M14.5 3v6" stroke="#bbb" stroke-width="1"/></svg>
<div class="a t11" style="left:298px;top:198px;word-spacing:1.6px">Константа B = 9</div>
<div class="a t11" style="left:583px;top:198px">16907</div>
<div class="a t11" style="left:765px;top:198px;letter-spacing:0.6px">у.е.</div>
<div class="a" style="left:276px;top:214px;width:299px;height:17px;background:#f7f7f7"></div>
<div class="a" style="left:577px;top:214px;width:180px;height:17px;background:#f7f7f7"></div>
<div class="a" style="left:759px;top:214px;width:84px;height:17px;background:#f7f7f7"></div>
<svg class="a" style="left:282px;top:217px" width="16" height="12" viewBox="0 0 16 12"><rect x="0.4" y="3.4" width="9.6" height="3.6" rx="0.6" fill="#2c82e6"/><rect x="0" y="3.4" width="1" height="3.6" fill="#9ab8d8"/><path d="M10 0.8h4M10 11.2h4M12 0.8v10.4" stroke="#555" stroke-width="1.3" fill="none"/><path d="M14.5 3v6" stroke="#bbb" stroke-width="1"/></svg>
<div class="a t11" style="left:298px;top:215px;word-spacing:1.6px">Константа C = 9</div>
<div class="a t11" style="left:583px;top:215px">53890</div>
<div class="a t11" style="left:765px;top:215px;letter-spacing:0.6px">у.е.</div>
<svg class="a" style="left:282px;top:234px" width="16" height="12" viewBox="0 0 16 12"><rect x="0.4" y="3.4" width="9.6" height="3.6" rx="0.6" fill="#2c82e6"/><rect x="0" y="3.4" width="1" height="3.6" fill="#9ab8d8"/><path d="M10 0.8h4M10 11.2h4M12 0.8v10.4" stroke="#555" stroke-width="1.3" fill="none"/><path d="M14.5 3v6" stroke="#bbb" stroke-width="1"/></svg>
<div class="a t11" style="left:298px;top:232px;word-spacing:1.6px">Константа C = 9</div>
<div class="a t11" style="left:583px;top:232px">16907</div>
<div class="a t11" style="left:765px;top:232px;letter-spacing:0.6px">у.е.</div>
<div class="a" style="left:276px;top:248px;width:299px;height:17px;background:#f7f7f7"></div>
<div class="a" style="left:577px;top:248px;width:180px;height:17px;background:#f7f7f7"></div>
<div class="a" style="left:759px;top:248px;width:84px;height:17px;background:#f7f7f7"></div>
<svg class="a" style="left:282px;top:251px" width="16" height="12" viewBox="0 0 16 12"><rect x="0.4" y="3.4" width="9.6" height="3.6" rx="0.6" fill="#2c82e6"/><rect x="0" y="3.4" width="1" height="3.6" fill="#9ab8d8"/><path d="M10 0.8h4M10 11.2h4M12 0.8v10.4" stroke="#555" stroke-width="1.3" fill="none"/><path d="M14.5 3v6" stroke="#bbb" stroke-width="1"/></svg>
<div class="a t11" style="left:298px;top:249px;word-spacing:1.6px">Константа D = 1</div>
<div class="a t11" style="left:583px;top:249px">2</div>
<div class="a t11" style="left:765px;top:249px;letter-spacing:0.6px">у.е.</div>
<svg class="a" style="left:282px;top:268px" width="16" height="12" viewBox="0 0 16 12"><rect x="0.4" y="3.4" width="9.6" height="3.6" rx="0.6" fill="#2c82e6"/><rect x="0" y="3.4" width="1" height="3.6" fill="#9ab8d8"/><path d="M10 0.8h4M10 11.2h4M12 0.8v10.4" stroke="#555" stroke-width="1.3" fill="none"/><path d="M14.5 3v6" stroke="#bbb" stroke-width="1"/></svg>
<div class="a t11" style="left:298px;top:266px;word-spacing:1.6px">Константа D = 148</div>
<div class="a t11" style="left:583px;top:266px">69</div>
<div class="a t11" style="left:765px;top:266px;letter-spacing:0.6px">у.е.</div>
<div class="a" style="left:276px;top:282px;width:299px;height:17px;background:#f7f7f7"></div>
<div class="a" style="left:577px;top:282px;width:180px;height:17px;background:#f7f7f7"></div>
<div class="a" style="left:759px;top:282px;width:84px;height:17px;background:#f7f7f7"></div>
<svg class="a" style="left:282px;top:285px" width="16" height="12" viewBox="0 0 16 12"><rect x="0.4" y="3.4" width="9.6" height="3.6" rx="0.6" fill="#2c82e6"/><rect x="0" y="3.4" width="1" height="3.6" fill="#9ab8d8"/><path d="M10 0.8h4M10 11.2h4M12 0.8v10.4" stroke="#555" stroke-width="1.3" fill="none"/><path d="M14.5 3v6" stroke="#bbb" stroke-width="1"/></svg>
<div class="a t11" style="left:298px;top:283px;word-spacing:1.6px">Константа D = 16</div>
<div class="a t11" style="left:583px;top:283px">184</div>
<div class="a t11" style="left:765px;top:283px;letter-spacing:0.6px">у.е.</div>
<svg class="a" style="left:282px;top:302px" width="16" height="12" viewBox="0 0 16 12"><rect x="0.4" y="3.4" width="9.6" height="3.6" rx="0.6" fill="#2c82e6"/><rect x="0" y="3.4" width="1" height="3.6" fill="#9ab8d8"/><path d="M10 0.8h4M10 11.2h4M12 0.8v10.4" stroke="#555" stroke-width="1.3" fill="none"/><path d="M14.5 3v6" stroke="#bbb" stroke-width="1"/></svg>
<div class="a t11" style="left:298px;top:300px;word-spacing:1.6px">Константа E = 1</div>
<div class="a t11" style="left:583px;top:300px">8</div>
<div class="a t11" style="left:765px;top:300px;letter-spacing:0.6px">у.е.</div>
<div class="a" style="left:276px;top:316px;width:299px;height:17px;background:#f7f7f7"></div>
<div class="a" style="left:577px;top:316px;width:180px;height:17px;background:#f7f7f7"></div>
<div class="a" style="left:759px;top:316px;width:84px;height:17px;background:#f7f7f7"></div>
<svg class="a" style="left:282px;top:319px" width="16" height="12" viewBox="0 0 16 12"><rect x="0.4" y="3.4" width="9.6" height="3.6" rx="0.6" fill="#2c82e6"/><rect x="0" y="3.4" width="1" height="3.6" fill="#9ab8d8"/><path d="M10 0.8h4M10 11.2h4M12 0.8v10.4" stroke="#555" stroke-width="1.3" fill="none"/><path d="M14.5 3v6" stroke="#bbb" stroke-width="1"/></svg>
<div class="a t11" style="left:298px;top:317px;word-spacing:1.6px">Константа E = 148</div>
<div class="a t11" style="left:583px;top:317px">6</div>
<div class="a t11" style="left:765px;top:317px;letter-spacing:0.6px">у.е.</div>
<svg class="a" style="left:282px;top:336px" width="16" height="12" viewBox="0 0 16 12"><rect x="0.4" y="3.4" width="9.6" height="3.6" rx="0.6" fill="#2c82e6"/><rect x="0" y="3.4" width="1" height="3.6" fill="#9ab8d8"/><path d="M10 0.8h4M10 11.2h4M12 0.8v10.4" stroke="#555" stroke-width="1.3" fill="none"/><path d="M14.5 3v6" stroke="#bbb" stroke-width="1"/></svg>
<div class="a t11" style="left:298px;top:334px;word-spacing:1.6px">Константа E = 28</div>
<div class="a t11" style="left:583px;top:334px">184</div>
<div class="a t11" style="left:765px;top:334px;letter-spacing:0.6px">у.е.</div>
<div class="a" style="left:276px;top:350px;width:299px;height:17px;background:#f7f7f7"></div>
<div class="a" style="left:577px;top:350px;width:180px;height:17px;background:#f7f7f7"></div>
<div class="a" style="left:759px;top:350px;width:84px;height:17px;background:#f7f7f7"></div>
<svg class="a" style="left:282px;top:353px" width="16" height="12" viewBox="0 0 16 12"><rect x="0.4" y="3.4" width="9.6" height="3.6" rx="0.6" fill="#2c82e6"/><rect x="0" y="3.4" width="1" height="3.6" fill="#9ab8d8"/><path d="M10 0.8h4M10 11.2h4M12 0.8v10.4" stroke="#555" stroke-width="1.3" fill="none"/><path d="M14.5 3v6" stroke="#bbb" stroke-width="1"/></svg>
<div class="a t11" style="left:298px;top:351px;word-spacing:1.6px">Константа F = 1</div>
<div class="a t11" style="left:583px;top:351px">2</div>
<div class="a t11" style="left:765px;top:351px;letter-spacing:0.6px">у.е.</div>
<svg class="a" style="left:282px;top:370px" width="16" height="12" viewBox="0 0 16 12"><rect x="0.4" y="3.4" width="9.6" height="3.6" rx="0.6" fill="#2c82e6"/><rect x="0" y="3.4" width="1" height="3.6" fill="#9ab8d8"/><path d="M10 0.8h4M10 11.2h4M12 0.8v10.4" stroke="#555" stroke-width="1.3" fill="none"/><path d="M14.5 3v6" stroke="#bbb" stroke-width="1"/></svg>
<div class="a t11" style="left:298px;top:368px;word-spacing:1.6px">Константа F = 148</div>
<div class="a t11" style="left:583px;top:368px">71</div>
<div class="a t11" style="left:765px;top:368px;letter-spacing:0.6px">у.е.</div>
<div class="a" style="left:276px;top:384px;width:299px;height:17px;background:#f7f7f7"></div>
<div class="a" style="left:577px;top:384px;width:180px;height:17px;background:#f7f7f7"></div>
<div class="a" style="left:759px;top:384px;width:84px;height:17px;background:#f7f7f7"></div>
<svg class="a" style="left:282px;top:387px" width="16" height="12" viewBox="0 0 16 12"><rect x="0.4" y="3.4" width="9.6" height="3.6" rx="0.6" fill="#2c82e6"/><rect x="0" y="3.4" width="1" height="3.6" fill="#9ab8d8"/><path d="M10 0.8h4M10 11.2h4M12 0.8v10.4" stroke="#555" stroke-width="1.3" fill="none"/><path d="M14.5 3v6" stroke="#bbb" stroke-width="1"/></svg>
<div class="a t11" style="left:298px;top:385px;word-spacing:1.6px">Константа F = 32</div>
<div class="a t11" style="left:583px;top:385px">60</div>
<div class="a t11" style="left:765px;top:385px;letter-spacing:0.6px">у.е.</div>
<svg class="a" style="left:282px;top:404px" width="16" height="12" viewBox="0 0 16 12"><rect x="0.4" y="3.4" width="9.6" height="3.6" rx="0.6" fill="#2c82e6"/><rect x="0" y="3.4" width="1" height="3.6" fill="#9ab8d8"/><path d="M10 0.8h4M10 11.2h4M12 0.8v10.4" stroke="#555" stroke-width="1.3" fill="none"/><path d="M14.5 3v6" stroke="#bbb" stroke-width="1"/></svg>
<div class="a t11" style="left:298px;top:402px;word-spacing:1.6px">Константа = 58624</div>
<div class="a t11" style="left:583px;top:402px">9481</div>
<div class="a t11" style="left:765px;top:402px;letter-spacing:0.6px">у.е.</div>
<div class="a" style="left:276px;top:418px;width:299px;height:17px;background:#f7f7f7"></div>
<div class="a" style="left:577px;top:418px;width:180px;height:17px;background:#f7f7f7"></div>
<div class="a" style="left:759px;top:418px;width:84px;height:17px;background:#f7f7f7"></div>
<svg class="a" style="left:282px;top:421px" width="16" height="12" viewBox="0 0 16 12"><rect x="0.4" y="3.4" width="9.6" height="3.6" rx="0.6" fill="#2c82e6"/><rect x="0" y="3.4" width="1" height="3.6" fill="#9ab8d8"/><path d="M10 0.8h4M10 11.2h4M12 0.8v10.4" stroke="#555" stroke-width="1.3" fill="none"/><path d="M14.5 3v6" stroke="#bbb" stroke-width="1"/></svg>
<div class="a t11" style="left:298px;top:419px;word-spacing:1.6px">Константа  = 57856</div>
<div class="a t11" style="left:583px;top:419px">553</div>
<div class="a t11" style="left:765px;top:419px;letter-spacing:0.6px">у.е.</div>
<svg class="a" style="left:226px;top:481px" width="14" height="22" viewBox="0 0 14 22"><path d="M0.5 0.5 L0.5 16 L4 12.5 L6.5 18.5 L9 17.5 L6.5 11.5 L11.5 11.5 Z" fill="#fff" stroke="#222" stroke-width="1"/></svg>
</body></html>
